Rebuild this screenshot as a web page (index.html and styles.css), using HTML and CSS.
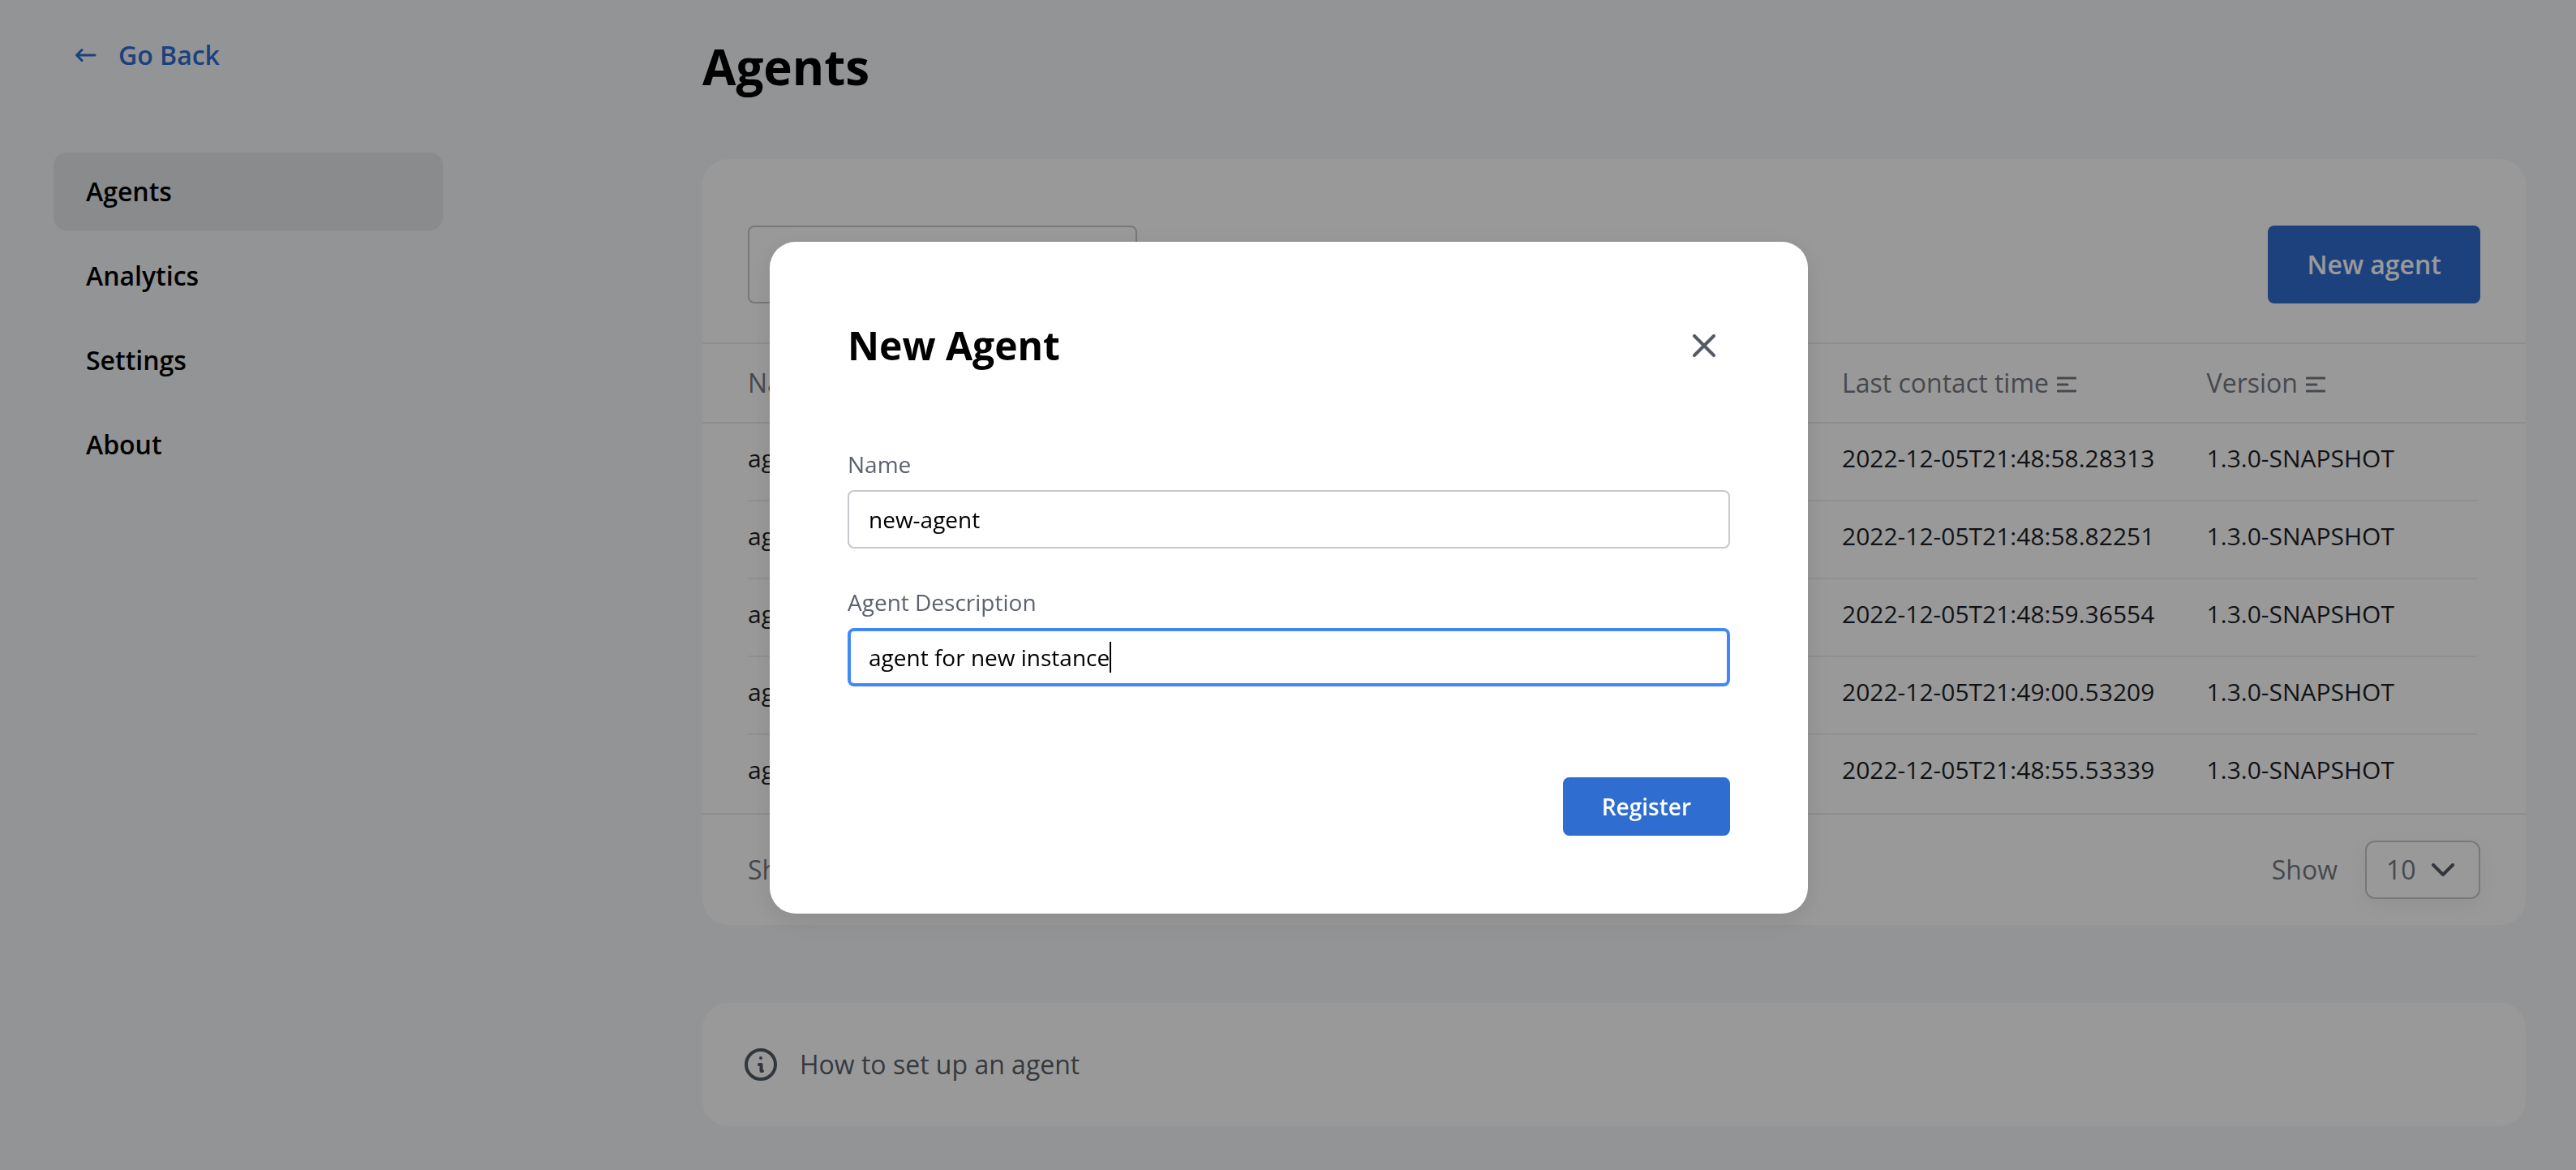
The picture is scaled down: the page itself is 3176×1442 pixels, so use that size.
FILE: index.html
```html
<!DOCTYPE html>
<html lang="en">
<head>
<meta charset="utf-8">
<title>Agents</title>
<link rel="stylesheet" href="styles.css">
</head>
<body>
<div class="layout">
  <aside class="sidebar">
    <a class="back" href="#">
      <svg class="back-icon" viewBox="0 0 28 20" aria-hidden="true"><path d="M25 10H3M9 3.500l-6.500 6.500 6.500 6.500"/></svg>
      Go Back
    </a>
    <nav class="nav">
      <a class="nav-link active" href="#">Agents</a>
      <a class="nav-link" href="#">Analytics</a>
      <a class="nav-link" href="#">Settings</a>
      <a class="nav-link" href="#">About</a>
    </nav>
  </aside>
  <main class="main">
    <h1 class="page-title">Agents</h1>
    <section class="card">
      <div class="toolbar">
        <input class="search" type="text" aria-label="Search agents">
        <button class="button button-large" type="button">New agent</button>
      </div>
      <table class="table">
        <thead>
          <tr>
            <th class="col-name">Name</th>
            <th class="col-time">Last contact time <svg class="sort" viewBox="0 0 24 20" aria-hidden="true"><path d="M1 2h22M1 10h12M1 18h22"/></svg></th>
            <th class="col-version">Version <svg class="sort" viewBox="0 0 24 20" aria-hidden="true"><path d="M1 2h22M1 10h12M1 18h22"/></svg></th>
          </tr>
        </thead>
        <tbody>
          <tr><td>agent</td><td>2022-12-05T21:48:58.28313</td><td>1.3.0-SNAPSHOT</td></tr>
          <tr><td>agent</td><td>2022-12-05T21:48:58.82251</td><td>1.3.0-SNAPSHOT</td></tr>
          <tr><td>agent</td><td>2022-12-05T21:48:59.36554</td><td>1.3.0-SNAPSHOT</td></tr>
          <tr><td>agent</td><td>2022-12-05T21:49:00.53209</td><td>1.3.0-SNAPSHOT</td></tr>
          <tr><td>agent</td><td>2022-12-05T21:48:55.53339</td><td>1.3.0-SNAPSHOT</td></tr>
        </tbody>
      </table>
      <div class="pager">
        <span>Show</span>
        <div class="pager-size">
          <label for="page-size">Show</label>
          <div class="select-box">
            <select class="select" id="page-size"><option>10</option></select>
            <svg class="chevron" viewBox="0 0 28 16" aria-hidden="true"><path d="M2 2l12 12L26 2"/></svg>
          </div>
        </div>
      </div>
    </section>
    <section class="card help">
      <svg class="info" viewBox="0 0 40 40" aria-hidden="true"><circle cx="20" cy="20" r="18"/><path d="M18 20h2.500v8h1.500"/><circle class="dot" cx="20" cy="12" r="2"/></svg>
      <span>How to set up an agent</span>
    </section>
  </main>
</div>
<div class="overlay">
  <form class="modal" role="dialog" aria-labelledby="modal-title">
    <header class="modal-head">
      <h2 class="modal-title" id="modal-title">New Agent</h2>
      <button class="close" type="button" aria-label="Close">
        <svg class="close-icon" viewBox="0 0 28 28" aria-hidden="true"><path d="M2 2l24 24M26 2L2 26"/></svg>
      </button>
    </header>
    <div class="field">
      <label for="agent-name">Name</label>
      <input class="input" id="agent-name" type="text" value="new-agent">
    </div>
    <div class="field">
      <label for="agent-description">Agent Description</label>
      <div class="input-box">
        <input class="input focused" id="agent-description" type="text" value="agent for new instance">
        <span class="caret"></span>
      </div>
    </div>
    <div class="actions">
      <button class="button" type="button">Register</button>
    </div>
  </form>
</div>
</body>
</html>
```
FILE: styles.css
```css
* { box-sizing: border-box; }

body {
  margin: 0;
  min-height: 100vh;
  background: #f5f7fa;
  color: #000;
  font: 400 28px/40px "Open Sans", sans-serif;
}

button, input, select { font: inherit; color: inherit; }

svg {
  fill: none;
  stroke: currentColor;
  stroke-width: 4;
  stroke-linecap: round;
  stroke-linejoin: round;
}

.layout {
  display: grid;
  grid-template-columns: 480px 1fr;
  gap: 320px;
  padding: 0 62px 0 66px;
}

.sidebar { padding-top: 46px; }

.back {
  display: flex;
  align-items: center;
  gap: 26px;
  height: 44px;
  padding-left: 26px;
  color: #2f6dd0;
  font-size: 32px;
  font-weight: 600;
  text-decoration: none;
}

.back-icon { width: 28px; height: 20px; stroke-width: 3; }

.nav {
  display: flex;
  flex-direction: column;
  gap: 8px;
  margin-top: 98px;
}

.nav-link {
  padding: 28px 40px;
  border-radius: 16px;
  color: #000;
  font-size: 32px;
  font-weight: 600;
  text-decoration: none;
}

.nav-link.active { background: #e6e8ea; }

.page-title {
  margin: 46px 0 78px;
  font-size: 60px;
  line-height: 72px;
  font-weight: 700;
}

.card {
  border-radius: 32px;
  background: #fff;
  color: #767a83;
  font-size: 32px;
}

.toolbar {
  display: flex;
  justify-content: space-between;
  padding: 82px 56px 48px;
}

.search {
  width: 480px;
  height: 96px;
  padding: 0 24px;
  border: 2px solid #c5c8cd;
  border-radius: 8px;
  background: none;
}

.button {
  height: 72px;
  padding: 0 48px;
  border: 0;
  border-radius: 8px;
  background: #2f6dd0;
  color: #fff;
  font-size: 28px;
  font-weight: 600;
}

.button-large { height: 96px; font-size: 32px; }

.table {
  width: 100%;
  table-layout: fixed;
  border-collapse: separate;
  border-spacing: 0;
}

.table th {
  height: 100px;
  padding: 0;
  border: solid #e9ebef;
  border-width: 2px 0;
  font-weight: 400;
  text-align: left;
}

.table td {
  height: 96px;
  padding: 0 0 10px;
  color: #1c1f28;
  font-size: 30px;
}

.table tr > :first-child { padding-left: 56px; }

.table tbody tr:not(:last-child) {
  background: linear-gradient(#eef0f3, #eef0f3) 56px 100% / calc(100% - 116px) 2px no-repeat;
}

.col-name { width: 62.5%; }
.col-time { width: 20%; }
.col-version { width: 17.5%; }

.sort { width: 24px; height: 20px; margin-left: 2px; stroke-width: 3; }

.pager {
  display: flex;
  align-items: center;
  justify-content: space-between;
  height: 138px;
  padding: 0 56px;
  border-top: 2px solid #e9ebef;
}

.pager-size { display: flex; align-items: center; gap: 34px; }

.select-box { position: relative; }

.select {
  display: block;
  width: 142px;
  height: 72px;
  padding: 0 24px;
  border: 2px solid #c5c8cd;
  border-radius: 12px;
  background: none;
  box-shadow: 0 8px 24px rgba(0, 0, 0, 0.05);
  appearance: none;
}

.chevron {
  position: absolute;
  top: 28px;
  right: 32px;
  width: 28px;
  height: 16px;
  color: #545b67;
  pointer-events: none;
}

.help {
  display: flex;
  align-items: center;
  gap: 28px;
  height: 152px;
  margin-top: 96px;
  padding: 0 52px;
  color: #5a5f69;
}

.info { width: 40px; height: 40px; color: #545b67; }
.dot { fill: currentColor; stroke: none; }

.overlay {
  position: fixed;
  inset: 0;
  display: flex;
  align-items: flex-start;
  justify-content: center;
  padding: 298px 0 0 2px;
  background: rgba(0, 0, 0, 0.4);
}

.modal {
  width: 1280px;
  padding: 96px;
  border-radius: 32px;
  background: #fff;
  box-shadow: 0 8px 32px rgba(0, 16, 0, 0.1);
}

.modal-head {
  display: flex;
  align-items: center;
  justify-content: space-between;
  height: 64px;
  margin-bottom: 94px;
}

.modal-title {
  margin: 0;
  font-size: 48px;
  line-height: 64px;
  font-weight: 700;
}

.close {
  display: grid;
  place-items: center;
  width: 64px;
  height: 64px;
  padding: 0;
  border: 0;
  background: none;
  color: #545b67;
}

.close-icon { width: 28px; height: 28px; }

.field { margin-bottom: 46px; color: #5c626e; }

.field label { display: block; margin-bottom: 12px; }

.input-box { position: relative; }

.input {
  display: block;
  width: 100%;
  height: 72px;
  padding: 0 24px;
  border: 2px solid #c5c8cd;
  border-radius: 8px;
  outline: 0;
  background: #fff;
  color: #000;
}

.focused { padding: 0 22px; border: 4px solid #4088f9; }

.caret {
  position: absolute;
  top: 17px;
  left: 323px;
  width: 2px;
  height: 38px;
  background: #000;
}

.actions {
  display: flex;
  justify-content: flex-end;
  margin-top: 112px;
}
```
